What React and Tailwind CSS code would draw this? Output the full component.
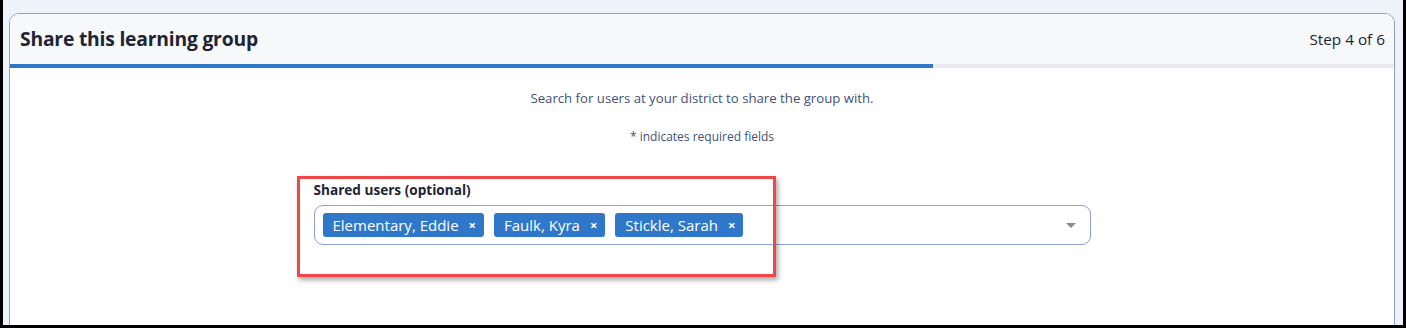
import React from "react";

function Tag({ label }) {
  return (
    <span className="flex h-[24px] items-center rounded-[3px] bg-[#2e77c9] pl-[10px] pr-[8px] text-[15px] text-white">
      <span>{label}</span>
      <span className="ml-[10px] text-[13px] font-bold leading-none">×</span>
    </span>
  );
}

export default function App() {
  return (
    <div
      className="relative h-[328px] w-[1406px] overflow-hidden border-b-[3px] border-l-[3px] border-r-[3px] border-black bg-[#eef2f9] pl-[6px] pr-[8px] pt-[13px]"
      style={{ fontFamily: '"Open Sans", "Noto Sans", sans-serif' }}
    >
      <div className="h-[400px] overflow-hidden rounded-t-[10px] border border-[#8e9fd2] bg-white">
        <div className="flex h-[50px] items-center justify-between bg-[#f7f8fa] pl-[10px] pr-[9px]">
          <h1 className="text-[19.3px] font-bold tracking-[-0.2px] text-[#1d2433]">Share this learning group</h1>
          <span className="text-[15.3px] text-[#1d2433]">Step 4 of 6</span>
        </div>
        <div className="h-[4px] bg-[#e8eaee]">
          <div className="h-full w-[66.7%] bg-[#2e77c9]" />
        </div>
        <div className="flex flex-col items-center pt-[21px] text-[#3f5175]">
          <p className="text-[13.2px] leading-[18px]">Search for users at your district to share the group with.</p>
          <p className="mt-[21px] text-[12px] leading-[18px]">* indicates required fields</p>
          <div className="mt-[35px] w-[777px]">
            <label className="block text-[13.6px] font-bold leading-[18px] text-[#1d2433]">Shared users (optional)</label>
            <div className="mt-[6px] flex h-[40px] items-center gap-[10px] rounded-[9px] border border-[#8e9fd2] pl-[8px] pr-[14px]">
              <Tag label="Elementary, Eddie" />
              <Tag label="Faulk, Kyra" />
              <Tag label="Stickle, Sarah" />
              <span className="ml-auto h-0 w-0 border-l-[5px] border-r-[5px] border-t-[5px] border-l-transparent border-r-transparent border-t-[#8a8a8a]" />
            </div>
          </div>
        </div>
      </div>
      <div className="absolute left-[294px] top-[176px] h-[101px] w-[479px] border-[3px] border-[#f04646] shadow-[2px_3px_5px_rgba(0,0,0,0.35)]" />
    </div>
  );
}
